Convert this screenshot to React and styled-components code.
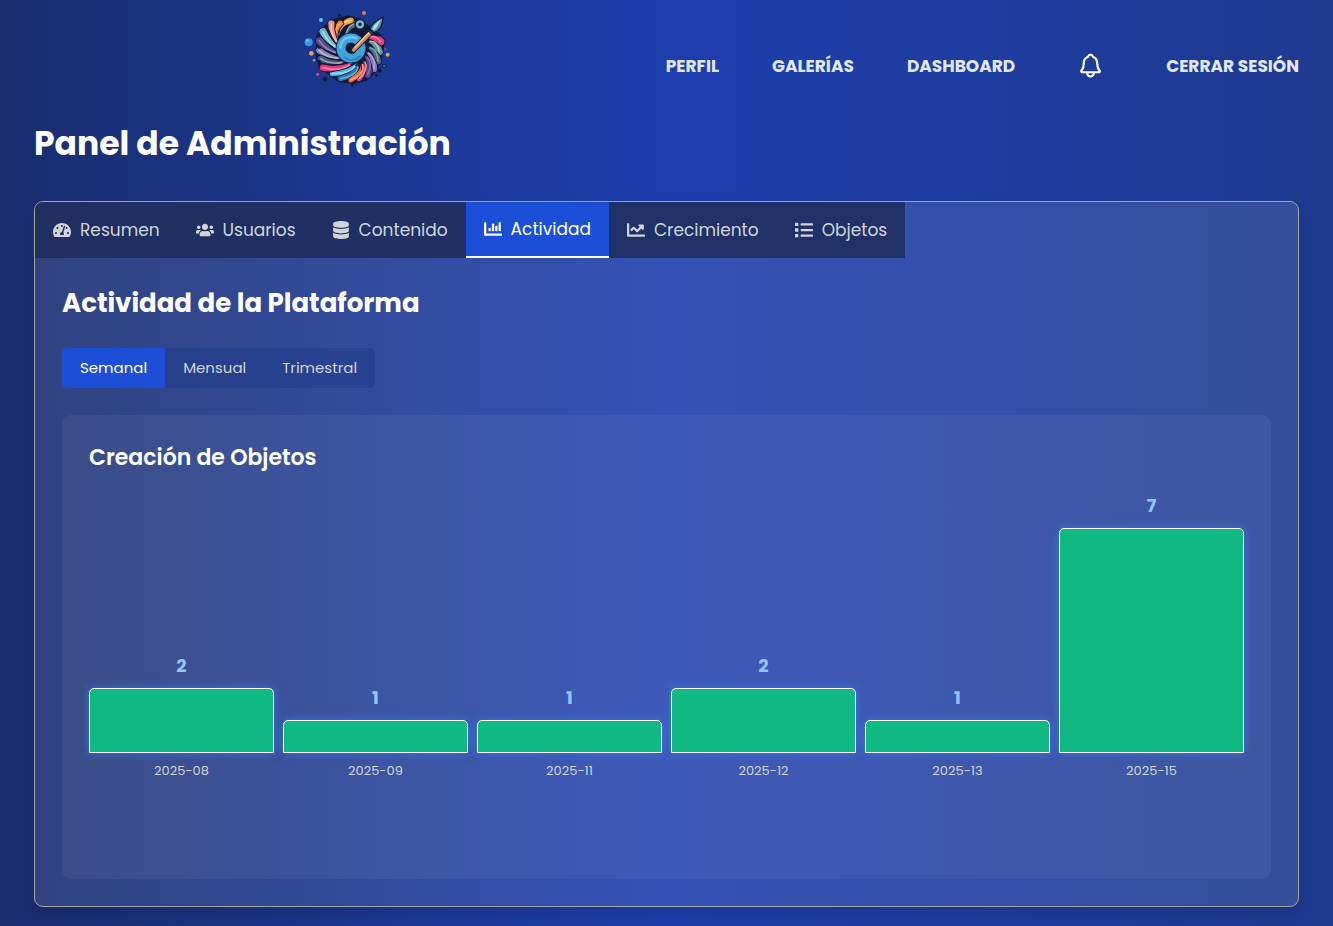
import React, { useState } from "react";
import styled, { createGlobalStyle } from "styled-components";
import {
  FaTachometerAlt,
  FaUsers,
  FaDatabase,
  FaChartBar,
  FaChartLine,
  FaList,
} from "react-icons/fa";
import { IoNotificationsOutline } from "react-icons/io5";

const GlobalStyle = createGlobalStyle`
  *, *::before, *::after { box-sizing: border-box; }
  body {
    margin: 0;
    min-height: 100vh;
    font-family: Poppins, Inter, "Liberation Sans", sans-serif;
    color: #fff;
    background: linear-gradient(90deg, #192d6e 0%, #1d3fae 50%, #1e3a8f 100%);
  }
  h1, h2, h3 { margin: 0; font-weight: 700; }
  button { font-family: inherit; border: 0; cursor: pointer; }
`;

const Page = styled.div`
  padding: 0 34px 19px;
`;

const Header = styled.header`
  display: flex;
  min-height: 96px;
`;

const LogoLink = styled.a`
  flex: 1;
  display: flex;
  justify-content: center;
  svg { display: block; }
`;

const Nav = styled.nav`
  display: flex;
  align-items: center;
  gap: 53px;
  padding-top: 35px;
`;

const NavLink = styled.a`
  color: #e0e7ff;
  font-size: 17px;
  font-weight: 700;
  line-height: 28px;
  text-decoration: none;
  white-space: nowrap;
`;

const BellButton = styled.button`
  display: flex;
  padding: 0 9px;
  background: none;
  color: #fff;
  font-size: 27px;
  svg path { stroke-width: 42px; }
`;

const Title = styled.h1`
  margin: 28px 0 37px;
  font-size: 33px;
  line-height: 40px;
`;

const Card = styled.section`
  border: 1px solid #a3a3a3;
  border-radius: 9px;
  overflow: hidden;
  background: rgba(255, 255, 255, 0.1);
  box-shadow: 0 9px 14px rgba(0, 0, 0, 0.1);
`;

const Tabs = styled.div`
  display: flex;
`;

const Tab = styled.button`
  display: flex;
  align-items: center;
  gap: 9px;
  height: 56px;
  padding: 0 18px;
  font-size: 17px;
  line-height: 28px;
  color: ${(p) => (p.$active ? "#fff" : "#d1d5db")};
  background: ${(p) => (p.$active ? "#1d4ed8" : "rgba(29, 43, 90, 0.85)")};
  border-bottom: ${(p) => (p.$active ? "2px solid #fff" : "0")};
  svg { font-size: 18px; }
`;

const Content = styled.div`
  padding: 27px;
`;

const Heading = styled.h2`
  margin-bottom: 27px;
  font-size: 26px;
  line-height: 36px;
`;

const Segments = styled.div`
  display: inline-flex;
  vertical-align: top;
  margin-bottom: 27px;
  border-radius: 5px;
  overflow: hidden;
  background: rgba(30, 58, 138, 0.5);
`;

const Segment = styled.button`
  height: 40px;
  padding: 0 18px 2px;
  font-size: 15px;
  color: ${(p) => (p.$active ? "#fff" : "#d1d5db")};
  background: ${(p) => (p.$active ? "#1d4ed8" : "transparent")};
`;

const ChartCard = styled.section`
  min-height: 464px;
  padding: 27px;
  border-radius: 9px;
  background: rgba(255, 255, 255, 0.05);
`;

const ChartTitle = styled.h3`
  margin-bottom: 16px;
  font-size: 22px;
  line-height: 32px;
  font-weight: 600;
`;

const Chart = styled.div`
  display: flex;
  align-items: flex-end;
  gap: 9px;
  height: 291px;
`;

const Column = styled.div`
  flex: 1;
  display: flex;
  flex-direction: column;
  text-align: center;
`;

const Value = styled.span`
  margin-bottom: 8px;
  font-size: 18px;
  line-height: 28px;
  font-weight: 700;
  color: #93c5fd;
`;

const Bar = styled.div`
  background: #10b981;
  border: 1px solid #fff;
  border-radius: 5px 5px 0 0;
  box-shadow: 0 0 10px rgba(59, 130, 246, 0.7);
`;

const Period = styled.span`
  margin-top: 8px;
  font-size: 13px;
  line-height: 20px;
  color: #d1d5db;
`;

const TABS = [
  { label: "Resumen", Icon: FaTachometerAlt },
  { label: "Usuarios", Icon: FaUsers },
  { label: "Contenido", Icon: FaDatabase },
  { label: "Actividad", Icon: FaChartBar },
  { label: "Crecimiento", Icon: FaChartLine },
  { label: "Objetos", Icon: FaList },
];
const RANGES = ["Semanal", "Mensual", "Trimestral"];
const DATA = [
  { period: "2025-08", value: 2 },
  { period: "2025-09", value: 1 },
  { period: "2025-11", value: 1 },
  { period: "2025-12", value: 2 },
  { period: "2025-13", value: 1 },
  { period: "2025-15", value: 7 },
];
const CHART_HEIGHT = 225;
const MAX = Math.max(...DATA.map((d) => d.value));

// Each swirl blade: outer tip, control point, inner point, width, colour, highlight
const BLADES = [
  [180, 72, 158, 76, 150, 124, 22, "#4d6377", "#8ba3b0"],
  [168, 61, 124, 68, 134, 140, 20, "#f0a13c", "#fbd27c"],
  [136, 70, 112, 88, 138, 146, 20, "#ee7f2e", "#f8b15e"],
  [109, 71, 104, 98, 144, 152, 22, "#ee8f8c", "#f8c0a8"],
  [84, 95, 96, 124, 148, 160, 24, "#69b4c8", "#a5dde3"],
  [73, 122, 90, 148, 152, 168, 24, "#5b4b8e", "#9585bd"],
  [72, 151, 94, 172, 162, 178, 21, "#8b80b2", "#bdb4d6"],
  [77, 176, 104, 194, 176, 182, 21, "#415f7c", "#8aa9b8"],
  [257, 125, 240, 104, 204, 118, 26, "#ea3d78", "#fb7d9f"],
  [253, 155, 246, 122, 204, 126, 24, "#5f9d98", "#a2cfc0"],
  [249, 184, 248, 150, 202, 136, 22, "#4d6879", "#839fa9"],
  [237, 207, 242, 174, 200, 144, 22, "#8777b4", "#b4a3d0"],
  [218, 224, 234, 190, 198, 152, 23, "#54458c", "#8370ad"],
  [192, 236, 222, 210, 198, 162, 18, "#e4487f", "#f58aa0"],
  [167, 240, 210, 222, 196, 166, 18, "#ee6a38", "#f8a06a"],
  [137, 235, 182, 230, 196, 172, 20, "#2579b8", "#5aaee0"],
  [112, 221, 164, 222, 196, 176, 19, "#45b5e4", "#94ddf3"],
  [84, 203, 130, 216, 198, 174, 22, "#e8387c", "#fa7ba4"],
];

function bladePath([ox, oy, cx, cy, ix, iy, w]) {
  const length = Math.hypot(cx - ox, cy - oy);
  const nx = (-(cy - oy) / length) * (w / 2);
  const ny = ((cx - ox) / length) * (w / 2);
  return `M${ix} ${iy}Q${cx + nx} ${cy + ny} ${ox + nx} ${oy + ny}A${w / 2} ${w / 2} 0 0 1 ${ox - nx} ${oy - ny}Q${cx - nx} ${cy - ny} ${ix} ${iy}Z`;
}

function Logo() {
  return (
    <svg width="110" height="96" viewBox="0 0 330 288" role="img" aria-label="Logo">
      <path d="M118 56L160 46L190 54L232 84L252 98L270 120L266 146L260 182L242 218L214 242L176 252L130 246L98 222L70 200L62 166L64 108L84 80Z" fill="#101a38" />
      {BLADES.map((b) => (
        <g key={`${b[0]}-${b[1]}`}>
          <path d={bladePath(b)} fill={b[7]} stroke="#101836" strokeWidth="3" strokeLinejoin="round" />
          <path d={`M${b[0]} ${b[1]}Q${b[2]} ${b[3]} ${(b[4] + b[2]) / 2} ${(b[5] + b[3]) / 2}`} fill="none" stroke={b[8]} strokeWidth="5" strokeLinecap="round" />
        </g>
      ))}
      <g fill="none" strokeLinecap="round">
        <circle cx="168" cy="144" r="30" stroke="#0f2147" strokeWidth="32" />
        <circle cx="168" cy="144" r="30" stroke="#3fa3dc" strokeWidth="27" />
        <path d="M136 142C138 118 158 106 184 114" stroke="#6cc4ee" strokeWidth="8" />
        <path d="M148 172C162 184 184 182 196 168" stroke="#2d83c4" strokeWidth="6" />
        <circle cx="195" cy="73" r="10" stroke="#12203f" strokeWidth="14" />
        <circle cx="195" cy="73" r="9" stroke="#79bed8" strokeWidth="7" />
        <path d="M172 154L231 94" stroke="#211e2e" strokeWidth="17" />
        <path d="M176 150L226 99" stroke="#c98b5d" strokeWidth="11" />
        <path d="M180 142L222 98" stroke="#f1bf91" strokeWidth="5" />
        <path d="M221 92L231 102" stroke="#172542" strokeWidth="5" />
      </g>
      <path d="M225 88C228 72 244 62 264 51C264 70 260 90 237 98Z" fill="#5793ad" stroke="#101a38" strokeWidth="4" />
      <path d="M232 87C236 76 245 68 258 58C251 72 246 84 237 91Z" fill="#b8e2ed" />
      <g fill="#111b38">
        <circle cx="134" cy="46" r="5" />
        <circle cx="74" cy="142" r="5" />
        <circle cx="90" cy="238" r="7" />
        <circle cx="254" cy="212" r="6" />
        <circle cx="72" cy="184" r="5" />
        <circle cx="172" cy="256" r="4" />
        <circle cx="266" cy="198" r="6" />
        <circle cx="244" cy="226" r="4" />
      </g>
      <circle cx="41" cy="127" r="12" fill="#2f9be4" />
      <circle cx="37" cy="122" r="4" fill="#71c6f3" />
      <circle cx="78" cy="60" r="6" fill="#55c5ef" />
      <circle cx="207" cy="39" r="6" fill="#dd795e" />
      <circle cx="49" cy="160" r="7" fill="#e3a168" />
      <circle cx="278" cy="164" r="6" fill="#e7965c" />
      <circle cx="68" cy="223" r="5" fill="#e53e8a" />
      <circle cx="57" cy="181" r="4" fill="#58a8bc" />
      <circle cx="271" cy="148" r="4" fill="#8d408d" />
      <circle cx="267" cy="198" r="3" fill="#4594bc" />
    </svg>
  );
}

export default function App() {
  const [tab, setTab] = useState("Actividad");
  const [range, setRange] = useState("Semanal");
  return (
    <>
      <GlobalStyle />
      <Page>
        <Header>
          <LogoLink href="#inicio"><Logo /></LogoLink>
          <Nav>
            <NavLink href="#perfil">PERFIL</NavLink>
            <NavLink href="#galerias">GALERÍAS</NavLink>
            <NavLink href="#dashboard">DASHBOARD</NavLink>
            <BellButton type="button" aria-label="Notificaciones"><IoNotificationsOutline /></BellButton>
            <NavLink href="#salir">CERRAR SESIÓN</NavLink>
          </Nav>
        </Header>
        <main>
          <Title>Panel de Administración</Title>
          <Card>
            <Tabs role="tablist">
              {TABS.map(({ label, Icon }) => (
                <Tab key={label} type="button" role="tab" aria-selected={tab === label} $active={tab === label} onClick={() => setTab(label)}>
                  <Icon aria-hidden="true" />
                  {label}
                </Tab>
              ))}
            </Tabs>
            <Content>
              <Heading>Actividad de la Plataforma</Heading>
              <Segments>
                {RANGES.map((label) => (
                  <Segment key={label} type="button" aria-pressed={range === label} $active={range === label} onClick={() => setRange(label)}>
                    {label}
                  </Segment>
                ))}
              </Segments>
              <ChartCard>
                <ChartTitle>Creación de Objetos</ChartTitle>
                <Chart>
                  {DATA.map(({ period, value }) => (
                    <Column key={period}>
                      <Value>{value}</Value>
                      <Bar style={{ height: Math.ceil((value / MAX) * CHART_HEIGHT) }} />
                      <Period>{period}</Period>
                    </Column>
                  ))}
                </Chart>
              </ChartCard>
            </Content>
          </Card>
        </main>
      </Page>
    </>
  );
}
